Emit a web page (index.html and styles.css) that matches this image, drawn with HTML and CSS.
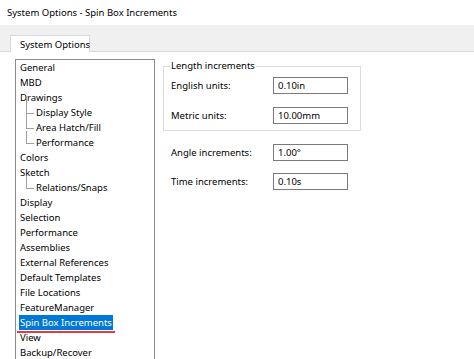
FILE: index.html
```html
<!DOCTYPE html>
<html lang="en">
<head>
    <meta charset="UTF-8">
    <meta name="viewport" content="width=device-width, initial-scale=1.0">
    <title>System Options - Spin Box Increments</title>
    <link rel="stylesheet" href="styles.css">
</head>
<body>
    <div class="titlebar">System Options - Spin Box Increments</div>
    <div class="tabstrip">
        <div class="tab">System Options</div>
    </div>
    <div class="page">
        <ul class="options-list">
            <li>General</li>
            <li>MBD</li>
            <li>Drawings</li>
            <li class="child">Display Style</li>
            <li class="child">Area Hatch/Fill</li>
            <li class="child last">Performance</li>
            <li>Colors</li>
            <li>Sketch</li>
            <li class="child last">Relations/Snaps</li>
            <li>Display</li>
            <li>Selection</li>
            <li>Performance</li>
            <li>Assemblies</li>
            <li>External References</li>
            <li>Default Templates</li>
            <li>File Locations</li>
            <li>FeatureManager</li>
            <li><span class="selected">Spin Box Increments</span></li>
            <li>View</li>
            <li>Backup/Recover</li>
        </ul>
        <div class="settings">
            <fieldset class="group">
                <legend>Length increments</legend>
                <div class="row">
                    <label>English units:</label>
                    <input type="text" value="0.10in">
                </div>
                <div class="row">
                    <label>Metric units:</label>
                    <input type="text" value="10.00mm">
                </div>
            </fieldset>
            <div class="row loose">
                <label>Angle increments:</label>
                <input type="text" value="1.00°">
            </div>
            <div class="row loose">
                <label>Time increments:</label>
                <input type="text" value="0.10s">
            </div>
        </div>
    </div>
</body>
</html>
```

FILE: styles.css
```css
html, body {
    height: 359px;
    overflow: hidden;
}
body {
    margin: 0;
    background: #ffffff;
    color: #000000;
    font-family: "Noto Sans", "Open Sans", sans-serif;
    font-size: 9.5px;
    display: flex;
    flex-direction: column;
}
.titlebar {
    height: 25px;
    line-height: 26px;
    padding-left: 7px;
}
.tabstrip {
    height: 26px;
    background: #f0f0f0;
    border-bottom: 1px solid #dadada;
    padding-left: 10px;
    display: flex;
    align-items: flex-end;
}
.tab {
    white-space: nowrap;
    width: 69px;
    height: 16px;
    line-height: 17px;
    padding-left: 9px;
    background: #ffffff;
    border: 1px solid #d9d9d9;
    border-bottom: none;
    margin-bottom: -1px;
}
.page {
    flex: 1;
    min-height: 0;
    display: flex;
    align-items: stretch;
    padding: 7px 0 0 15px;
}
.options-list {
    list-style: none;
    margin: 0;
    padding: 0;
    width: 138px;
    border: 1px solid #8a8a8a;
    border-bottom: none;
    overflow: hidden;
}
.options-list li {
    position: relative;
    height: 15px;
    line-height: 15px;
    padding-left: 4px;
    white-space: nowrap;
}
.options-list li.child {
    padding-left: 20px;
}
.options-list li.child::before {
    content: "";
    position: absolute;
    left: 10px;
    top: -7px;
    width: 7px;
    height: 15px;
    border-left: 1px solid #a0a0a0;
    border-bottom: 1px solid #a0a0a0;
}
.options-list li.child.last::before {
    top: -4px;
    height: 12px;
}
.selected {
    position: relative;
    display: inline-block;
    background: #0078d7;
    color: #ffffff;
    padding: 0 1px;
    margin-left: -1px;
}
.selected::after {
    content: "";
    position: absolute;
    left: -2px;
    right: -2px;
    bottom: -3px;
    height: 2px;
    background: #e23a46;
}
.settings {
    margin-left: 8px;
    width: 198px;
}
.group {
    margin: 0;
    padding: 4px 0 6px 7px;
    border: 1px solid #dcdcdc;
}
.group legend {
    padding: 0 1px;
    margin-left: -1px;
    line-height: 14px;
}
.row {
    display: flex;
    align-items: center;
    height: 17px;
}
.group .row + .row {
    margin-top: 13px;
}
.row label {
    width: 102px;
}
.row input {
    box-sizing: border-box;
    width: 75px;
    height: 17px;
    margin: 0;
    padding: 0 4px;
    border: 1px solid #7a7a7a;
    font-family: inherit;
    font-size: 9.5px;
    color: #000000;
}
.row.loose {
    padding-left: 8px;
    margin-top: 12px;
}
.group + .row.loose {
    margin-top: 13px;
}
```
